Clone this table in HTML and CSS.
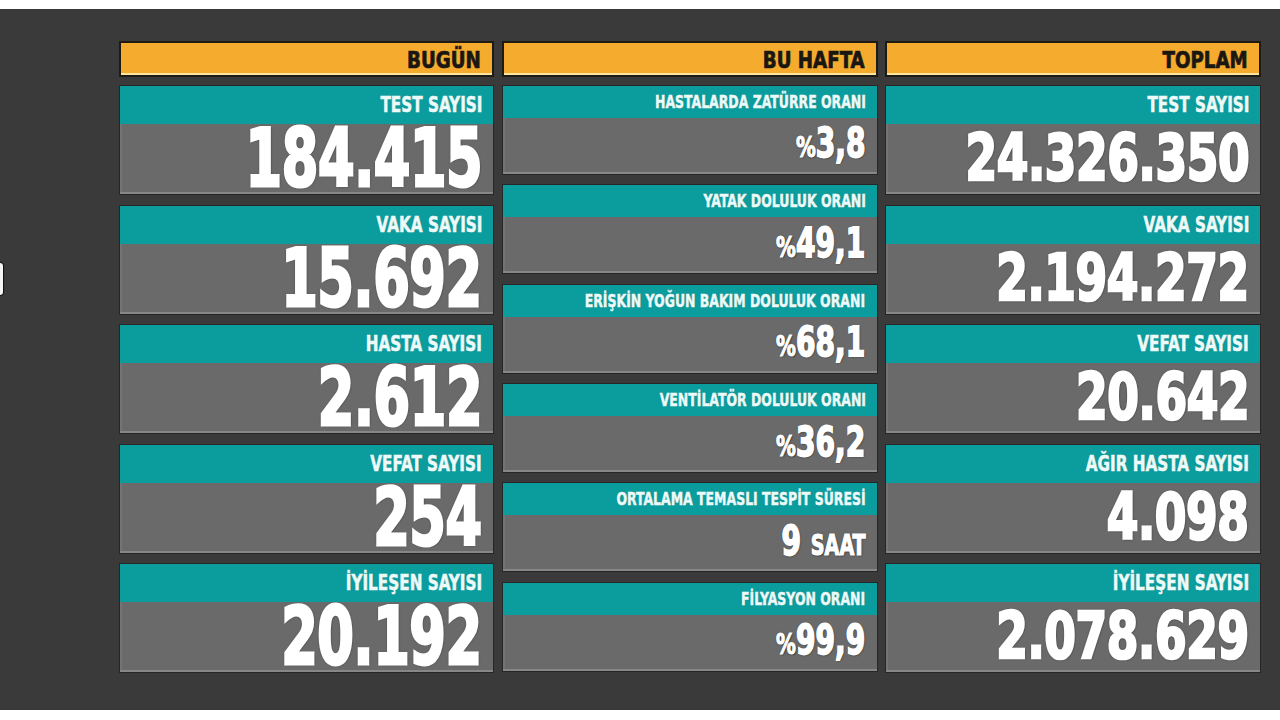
FILE: index.html
```html
<!DOCTYPE html>
<html lang="tr">
<head>
<meta charset="utf-8">
<title>Koronavirüs Tablosu</title>
<link rel="stylesheet" href="styles.css">
</head>
<body>
<div class="board">
  <div class="edge"></div>
  <div class="grid">
    <section class="col">
      <div class="hdr"><span class="sq hdr-t">BUGÜN</span></div>
      <div class="card big">
        <div class="band"><span class="sq lbl">TEST SAYISI</span></div>
        <div class="body"><span class="sq num">184.415</span></div>
      </div>
      <div class="card big">
        <div class="band"><span class="sq lbl">VAKA SAYISI</span></div>
        <div class="body"><span class="sq num">15.692</span></div>
      </div>
      <div class="card big">
        <div class="band"><span class="sq lbl">HASTA SAYISI</span></div>
        <div class="body"><span class="sq num">2.612</span></div>
      </div>
      <div class="card big">
        <div class="band"><span class="sq lbl">VEFAT SAYISI</span></div>
        <div class="body"><span class="sq num">254</span></div>
      </div>
      <div class="card big">
        <div class="band"><span class="sq lbl">İYİLEŞEN SAYISI</span></div>
        <div class="body"><span class="sq num">20.192</span></div>
      </div>
    </section>

    <section class="col mid">
      <div class="hdr"><span class="sq hdr-t">BU HAFTA</span></div>
      <div class="card small">
        <div class="band"><span class="sq mlbl">HASTALARDA ZATÜRRE ORANI</span></div>
        <div class="body"><span class="sq mval"><span class="pct">%</span>3,8</span></div>
      </div>
      <div class="card small">
        <div class="band"><span class="sq mlbl">YATAK DOLULUK ORANI</span></div>
        <div class="body"><span class="sq mval"><span class="pct">%</span>49,1</span></div>
      </div>
      <div class="card small">
        <div class="band"><span class="sq mlbl">ERİŞKİN YOĞUN BAKIM DOLULUK ORANI</span></div>
        <div class="body"><span class="sq mval"><span class="pct">%</span>68,1</span></div>
      </div>
      <div class="card small">
        <div class="band"><span class="sq mlbl">VENTİLATÖR DOLULUK ORANI</span></div>
        <div class="body"><span class="sq mval"><span class="pct">%</span>36,2</span></div>
      </div>
      <div class="card small">
        <div class="band"><span class="sq mlbl">ORTALAMA TEMASLI TESPİT SÜRESİ</span></div>
        <div class="body"><span class="sq mval">9 <span class="unit">SAAT</span></span></div>
      </div>
      <div class="card small">
        <div class="band"><span class="sq mlbl">FİLYASYON ORANI</span></div>
        <div class="body"><span class="sq mval"><span class="pct">%</span>99,9</span></div>
      </div>
    </section>

    <section class="col">
      <div class="hdr"><span class="sq hdr-t">TOPLAM</span></div>
      <div class="card big">
        <div class="band"><span class="sq lbl">TEST SAYISI</span></div>
        <div class="body"><span class="sq rnum">24.326.350</span></div>
      </div>
      <div class="card big">
        <div class="band"><span class="sq lbl">VAKA SAYISI</span></div>
        <div class="body"><span class="sq rnum">2.194.272</span></div>
      </div>
      <div class="card big">
        <div class="band"><span class="sq lbl">VEFAT SAYISI</span></div>
        <div class="body"><span class="sq rnum">20.642</span></div>
      </div>
      <div class="card big">
        <div class="band"><span class="sq lbl">AĞIR HASTA SAYISI</span></div>
        <div class="body"><span class="sq rnum">4.098</span></div>
      </div>
      <div class="card big">
        <div class="band"><span class="sq lbl">İYİLEŞEN SAYISI</span></div>
        <div class="body"><span class="sq rnum">2.078.629</span></div>
      </div>
    </section>
  </div>
</div>
</body>
</html>
```

FILE: styles.css
```css
html, body {
  margin: 0;
  padding: 0;
  background: #ffffff;
}

body {
  font-family: "DejaVu Sans Condensed", "DejaVu Sans", sans-serif;
  font-weight: bold;
  width: 1280px;
  height: 720px;
  overflow: hidden;
}

.board {
  position: relative;
  margin-top: 9px;
  height: 701px;
  background: #3a3a3a;
  box-sizing: border-box;
  padding: 32px 0 0 119px;
  overflow: hidden;
}

.edge {
  position: absolute;
  left: 0;
  top: 254px;
  width: 3px;
  height: 32px;
  background: #f4f4f4;
  border-radius: 0 4px 4px 0;
  box-shadow: 1px 0 1px #111111, 0 -1px 1px #111111, 0 1px 1px #111111;
}

.grid {
  display: grid;
  grid-template-columns: 375px 376px 376px;
  column-gap: 7.5px;
}

.col {
  display: flex;
  flex-direction: column;
  gap: 9.5px;
}

.col.mid {
  gap: 9.4px;
}

.hdr {
  height: 36px;
  flex-shrink: 0;
  box-sizing: border-box;
  background: #f5ab2e;
  border: 2px solid #1e1a14;
  box-shadow: inset 0 -2px 0 #ffe7a0;
  display: flex;
  align-items: center;
  justify-content: flex-end;
  padding: 3px 11px 0 0;
  margin-bottom: -1.5px;
}

.sq {
  display: inline-block;
  transform-origin: right center;
  white-space: nowrap;
  line-height: 1;
}

.hdr-t {
  font-size: 23px;
  color: #1a1713;
  transform: scaleX(0.88);
  -webkit-text-stroke: 0.7px #1a1713;
}

.card {
  box-sizing: border-box;
  border: 1px solid #262626;
  display: flex;
  flex-direction: column;
  background: #6a6a6a;
  box-shadow: inset 0 -2px 0 #878787, inset 2px 0 0 #747474;
  flex-shrink: 0;
}

.card.big {
  height: 110px;
}

.card.small {
  height: 90px;
}

.mid .card.small:first-of-type {
  margin-top: 1px;
}

.band {
  flex-shrink: 0;
  background: #0b9c9d;
  display: flex;
  align-items: center;
  justify-content: flex-end;
  padding-right: 11px;
  color: #ecfbfa;
}

.big .band {
  height: 38px;
}

.small .band {
  height: 32px;
}

.body {
  flex: 1;
  min-height: 0;
  display: flex;
  align-items: center;
  justify-content: flex-end;
  padding-right: 11px;
  color: #ffffff;
}

.small .body {
  padding-bottom: 4px;
}

.lbl {
  font-size: 22px;
  transform: scaleX(0.77);
  -webkit-text-stroke: 0.6px #ecfbfa;
  text-shadow: 0 0 1px rgba(0, 0, 0, 0.35);
}

.mlbl {
  font-size: 18px;
  transform: scaleX(0.77);
  -webkit-text-stroke: 0.5px #ecfbfa;
  text-shadow: 0 0 1px rgba(0, 0, 0, 0.35);
}

.num {
  font-size: 80px;
  line-height: 0.8;
  transform: scaleX(0.73);
  letter-spacing: -0.5px;
  -webkit-text-stroke: 3px #ffffff;
  text-shadow: 0 0 3px rgba(0, 0, 0, 0.7), 1px 1px 2px rgba(0, 0, 0, 0.5);
}

.rnum {
  font-size: 64px;
  line-height: 0.8;
  transform: scaleX(0.79);
  letter-spacing: -0.5px;
  -webkit-text-stroke: 2.6px #ffffff;
  text-shadow: 0 0 3px rgba(0, 0, 0, 0.7), 1px 1px 2px rgba(0, 0, 0, 0.5);
}

.mval {
  font-size: 41px;
  line-height: 0.8;
  transform: scaleX(0.76);
  -webkit-text-stroke: 1.8px #ffffff;
  text-shadow: 0 0 2px rgba(0, 0, 0, 0.7), 1px 1px 2px rgba(0, 0, 0, 0.5);
}

.pct {
  font-size: 29px;
  -webkit-text-stroke: 1.2px #ffffff;
}

.unit {
  font-size: 28px;
  -webkit-text-stroke: 1.2px #ffffff;
}
```
